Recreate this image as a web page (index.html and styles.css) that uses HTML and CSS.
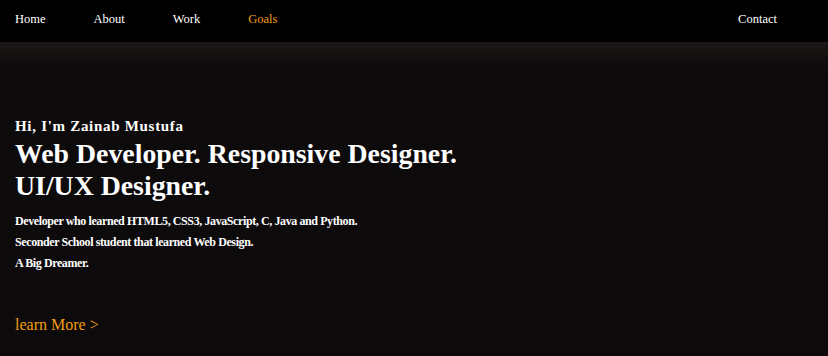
FILE: index.html
```html
<!DOCTYPE html>
<html lang="en">
<head>
    <meta charset="UTF-8">
    <meta name="viewport" content="width=device-width, initial-scale=1.0">
    <title>Zainab Mustufa</title>
    <link rel="stylesheet" href="styles.css">
</head>
<body>
    <header class="header">
        <nav class="nav">
            <a href="#home">Home</a>
            <a href="#about">About</a>
            <a href="#work">Work</a>
            <a href="#goals" class="active">Goals</a>
            <a href="#contact" class="contact">Contact</a>
        </nav>
    </header>

    <section class="hero" id="home">
        <h3>Hi, I'm Zainab Mustufa</h3>
        <h1>Web Developer. Responsive Designer.<br>UI/UX Designer.</h1>
        <p>Developer who learned HTML5, CSS3, JavaScript, C, Java and Python.</p>
        <p>Seconder School student that learned Web Design.</p>
        <p>A Big Dreamer.</p>
        <a href="#about" class="learn-more">learn More &gt;</a>
    </section>
</body>
</html>
```

FILE: styles.css
```css
body {
    font-family: "Liberation Serif", "Times New Roman", serif;
    margin: 0;
    padding: 0;
    background-color: #0c0a0b;
    color: #fff;
    height: 356px;
    overflow: hidden;
}
.header {
    background-color: #000;
    height: 42px;
    padding: 0 15px;
}
.nav {
    display: flex;
    align-items: center;
    gap: 48px;
    height: 38px;
}
.nav a {
    color: #fff;
    font-size: 12.5px;
    text-decoration: none;
}
.nav a.active {
    color: #f39c12;
}
.nav a.contact {
    margin-left: auto;
    margin-right: 36px;
}
.hero {
    background: linear-gradient(to bottom, #1b1716 0px, #0d0b0c 26px, #0c0a0b 100%);
    padding: 75px 15px 0;
    height: 239px;
}
.hero h3 {
    margin: 0;
    font-size: 15px;
    line-height: 18px;
    letter-spacing: 0.7px;
}
.hero h1 {
    margin: 3px 0 9px;
    font-size: 27.8px;
    line-height: 32px;
}
.hero p {
    margin: 0;
    font-size: 12px;
    font-weight: bold;
    line-height: 21px;
    letter-spacing: -0.4px;
}
.learn-more {
    display: inline-block;
    margin-top: 42px;
    color: #f39c12;
    font-size: 16px;
    text-decoration: none;
}
```
